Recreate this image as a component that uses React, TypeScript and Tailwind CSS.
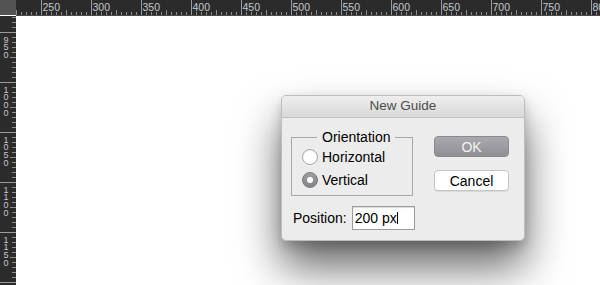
import React from "react";

const TICK = "#8c8c8c";
const LABEL = "#c3c8ce";

function TopRuler() {
  const ticks = [];
  const labels = [];
  // 250 sits at x=25 inside the ruler, 1 unit per px
  for (let i = -10; i < 120; i++) {
    const x = 25 + i * 5;
    if (x < 0 || x > 584) continue;
    const major = i % 10 === 0;
    const mid = i % 5 === 0;
    ticks.push(
      <line
        key={i}
        x1={x + 0.5}
        x2={x + 0.5}
        y1={major ? 0 : mid ? 10 : 12}
        y2={16}
        stroke={major ? "#9a9a9a" : TICK}
        strokeWidth={1}
      />
    );
    if (major) {
      labels.push(
        <text key={"l" + i} x={x + 1.5} y={11} fontSize={10.5} fill={LABEL}>
          {250 + (i / 10) * 50}
        </text>
      );
    }
  }
  return (
    <svg width={584} height={16} className="block">
      <rect width={584} height={16} fill="#2b2b2b" />
      {ticks}
      {labels}
      <line x1={0} x2={584} y1={15.5} y2={15.5} stroke="#4a4a4a" />
    </svg>
  );
}

function LeftRuler() {
  const ticks = [];
  const labels = [];
  // 950 sits at y=16 inside the ruler
  for (let i = -10; i < 60; i++) {
    const y = 16 + i * 5;
    if (y < 0 || y > 269) continue;
    const major = i % 10 === 0;
    const mid = i % 5 === 0;
    ticks.push(
      <line
        key={i}
        y1={y + 0.5}
        y2={y + 0.5}
        x1={major ? 0 : mid ? 10 : 12}
        x2={16}
        stroke={major ? "#9a9a9a" : TICK}
        strokeWidth={1}
      />
    );
    if (major && y < 240) {
      const digits = String(950 + (i / 10) * 50).split("");
      digits.forEach((d, j) => {
        labels.push(
          <text
            key={"l" + i + "-" + j}
            x={6}
            y={y + 10.5 + j * 7.8}
            fontSize={9}
            textAnchor="middle"
            fill={LABEL}
          >
            {d}
          </text>
        );
      });
    }
  }
  return (
    <svg width={16} height={269} className="block shrink-0">
      <rect width={16} height={269} fill="#2b2b2b" />
      {ticks}
      {labels}
    </svg>
  );
}

function Radio({ checked, label }: { checked?: boolean; label: string }) {
  return (
    <div className="flex items-center h-[16px] gap-[4px]">
      {checked ? (
        <span className="w-[16px] h-[16px] rounded-full bg-gradient-to-b from-[#9d9da2] to-[#838388] border border-[#7a7a7e] flex items-center justify-center">
          <span className="w-[6px] h-[6px] rounded-full bg-white" />
        </span>
      ) : (
        <span className="w-[16px] h-[16px] rounded-full bg-white border border-[#a6a6a6] shadow-[inset_0_1px_1px_rgba(0,0,0,0.08)]" />
      )}
      <span className="text-[14px] leading-[16px] text-black">{label}</span>
    </div>
  );
}

function NewGuideDialog() {
  return (
    <div className="w-[244px] rounded-[5px] border border-[#bdbdbd] bg-[#ececec] overflow-hidden shadow-[0_26px_44px_rgba(0,0,0,0.6),0_6px_12px_rgba(0,0,0,0.18)]">
      {/* TITLE BAR */}
      <div className="h-[22px] bg-gradient-to-b from-[#eeeeee] to-[#d9d9d9] border-b border-[#c2c2c2] flex items-center justify-center text-[13.5px] text-[#4d4d4d]">
        New Guide
      </div>

      {/* BODY */}
      <div className="pl-[9px] pr-[15px] pb-[10px]">
        <div className="flex items-start">
          <fieldset className="mt-[11px] w-[122px] border border-[#a9a9a9] pl-[10px] pb-[7px]">
            <legend className="ml-[15px] px-[5px] text-[14px] leading-[16px] text-black">
              Orientation
            </legend>
            <div className="flex flex-col gap-[7px] mt-[4px]">
              <Radio label="Horizontal" />
              <Radio checked label="Vertical" />
            </div>
          </fieldset>

          <div className="ml-[21px] mt-[18px] flex flex-col gap-[13px]">
            <button className="w-[75px] h-[21px] rounded-[4px] bg-gradient-to-b from-[#a9a9ae] to-[#909095] border border-[#8a8a8f] text-[14px] leading-none text-[#f4f4f4]">
              OK
            </button>
            <button className="w-[75px] h-[21px] rounded-[4px] bg-white border border-[#c4c4c4] shadow-[0_1px_0_rgba(0,0,0,0.08)] text-[14px] leading-none text-black">
              Cancel
            </button>
          </div>
        </div>

        <div className="mt-[10px] flex items-center gap-[5px] pl-[2px]">
          <span className="text-[14px] text-black">Position:</span>
          <div className="w-[63px] h-[24px] bg-white border border-[#9c9c9c] shadow-[inset_0_1px_1px_rgba(0,0,0,0.15)] flex items-center pl-[2px] text-[14px] text-black">
            <span>200 px</span>
            <span className="w-[1px] h-[12px] bg-black" />
          </div>
        </div>
      </div>
    </div>
  );
}

export default function App() {
  return (
    <div className="w-[600px] h-[285px] overflow-hidden flex flex-col bg-white font-['Liberation_Sans',Arial,sans-serif]">
      {/* TOP RULER */}
      <div className="flex h-[16px] shrink-0">
        <div className="w-[16px] h-[15px] bg-[#535353]" />
        <TopRuler />
      </div>

      <div className="flex flex-1 min-h-0">
        <LeftRuler />
        {/* CANVAS */}
        <div className="flex-1 bg-white pl-[265px] pt-[79px]">
          <NewGuideDialog />
        </div>
      </div>
    </div>
  );
}
